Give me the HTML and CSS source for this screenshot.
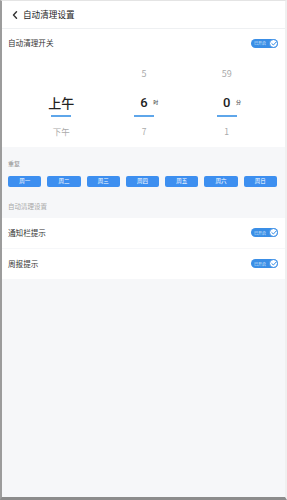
FILE: index.html
```html
<!DOCTYPE html>
<html lang="zh">
<head>
<meta charset="utf-8">
<link rel="stylesheet" href="styles.css">
</head>
<body>
<div class="screen">
  <header class="topbar">
    <svg class="back" width="6" height="8" viewBox="0 0 6 8"><path d="M4.5 0.8 L1.5 4 L4.5 7.2" fill="none" stroke="#333" stroke-width="1.4" stroke-linecap="round" stroke-linejoin="round"/></svg>
    <span class="title">自动清理设置</span>
  </header>
  <div class="row row-main">
    <span class="label">自动清理开关</span>
    <span class="toggle"><span class="toggle-text">已开启</span><span class="knob"><svg width="6" height="5" viewBox="0 0 6 5"><path d="M0.8 2.6 L2.4 4 L5.2 1" fill="none" stroke="#3a8ee6" stroke-width="1" stroke-linecap="round" stroke-linejoin="round"/></svg></span></span>
  </div>
  <section class="picker">
    <div class="col">
      <span class="val top"></span>
      <span class="val sel">上午</span>
      <span class="bar"></span>
      <span class="val bottom">下午</span>
    </div>
    <div class="col">
      <span class="val top">5</span>
      <span class="val sel num">6<span class="unit">时</span></span>
      <span class="bar"></span>
      <span class="val bottom">7</span>
    </div>
    <div class="col">
      <span class="val top">59</span>
      <span class="val sel num">0<span class="unit">分</span></span>
      <span class="bar"></span>
      <span class="val bottom">1</span>
    </div>
  </section>
  <section class="repeat">
    <div class="caption">重复</div>
    <div class="days">
      <span class="day">周一</span>
      <span class="day">周二</span>
      <span class="day">周三</span>
      <span class="day">周四</span>
      <span class="day">周五</span>
      <span class="day">周六</span>
      <span class="day">周日</span>
    </div>
    <div class="caption caption2">自动清理设置</div>
  </section>
  <div class="list">
    <div class="row">
      <span class="label">通知栏提示</span>
      <span class="toggle"><span class="toggle-text">已开启</span><span class="knob"><svg width="6" height="5" viewBox="0 0 6 5"><path d="M0.8 2.6 L2.4 4 L5.2 1" fill="none" stroke="#3a8ee6" stroke-width="1" stroke-linecap="round" stroke-linejoin="round"/></svg></span></span>
    </div>
    <div class="row">
      <span class="label">周报提示</span>
      <span class="toggle"><span class="toggle-text">已开启</span><span class="knob"><svg width="6" height="5" viewBox="0 0 6 5"><path d="M0.8 2.6 L2.4 4 L5.2 1" fill="none" stroke="#3a8ee6" stroke-width="1" stroke-linecap="round" stroke-linejoin="round"/></svg></span></span>
    </div>
  </div>
  <div class="rest"></div>
</div>
</body>
</html>
```

FILE: styles.css
```css
* { box-sizing: border-box; margin: 0; padding: 0; }
html, body { width: 287px; height: 500px; overflow: hidden; }
body {
  font-family: "Noto Sans CJK SC", "Noto Sans", sans-serif;
  color: #333;
  background: #f6f7f9;
}
.screen {
  width: 287px;
  height: 500px;
  display: flex;
  flex-direction: column;
  border-left: 2px solid #9c9c9c;
  border-top: 1px solid #e4e4e4;
  border-right: 2px solid #f0f0f0;
  border-bottom: 3px solid #8c8c8c;
  background: #f6f7f9;
}
.topbar {
  height: 28px;
  background: #fff;
  display: flex;
  align-items: center;
  padding-left: 10px;
  gap: 5px;
  border-bottom: 1px solid #eef0f2;
}
.back { display: block; }
.title { font-size: 8.6px; line-height: 1; color: #222; }
.row {
  height: 28px;
  background: #fff;
  display: flex;
  align-items: center;
  justify-content: space-between;
  padding: 0 7px 0 6px;
}
.label { font-size: 7.6px; line-height: 1; color: #333; }
.toggle {
  width: 27px;
  height: 9px;
  border-radius: 5px;
  background: #3a8ee6;
  display: flex;
  align-items: center;
  justify-content: space-between;
  padding-left: 3px;
}
.toggle-text { font-size: 4px; color: #dbe9fb; line-height: 1; }
.knob {
  width: 9px;
  height: 9px;
  border-radius: 50%;
  background: #fff;
  border: 1px solid #3a8ee6;
  display: flex;
  align-items: center;
  justify-content: center;
}
.knob svg { display: block; }
.picker {
  background: #fff;
  height: 90px;
  display: grid;
  grid-template-columns: repeat(3, 1fr);
  padding: 0 17px 0 18px;
}
.col {
  display: flex;
  flex-direction: column;
  align-items: center;
}
.val { display: block; line-height: 1; color: #aaa; font-size: 9px; }
.top { height: 9px; margin-top: 12px; }
.sel {
  margin-top: 18px;
  font-size: 13px;
  color: #222;
  font-weight: 500;
  height: 13px;
}
.num { font-family: "Roboto", "Noto Sans", sans-serif; position: relative; }
.unit {
  position: absolute;
  left: 13px;
  top: 3px;
  font-family: "Noto Sans CJK SC", sans-serif;
  font-size: 5px;
  color: #555;
  white-space: nowrap;
}
.bar {
  display: block;
  width: 20px;
  height: 2px;
  background: #5ea6ea;
  margin-top: 6px;
}
.bottom { margin-top: 10px; font-size: 8.5px; }
.repeat { padding: 14px 8px 0 6px; }
.caption { font-size: 6px; line-height: 1; color: #8a8a8a; }
.days {
  display: flex;
  gap: 6px;
  margin-top: 9px;
}
.day {
  flex: 1;
  height: 11px;
  border-radius: 2px;
  background: #3d8ff0;
  color: #fff;
  font-size: 5.5px;
  line-height: 11px;
  text-align: center;
}
.caption2 { margin-top: 16px; margin-bottom: 8px; font-size: 6.5px; color: #a8a8a8; }
.list { display: flex; flex-direction: column; gap: 1px; }
.list .row { height: 30px; }
.rest { flex: 1; }
```
